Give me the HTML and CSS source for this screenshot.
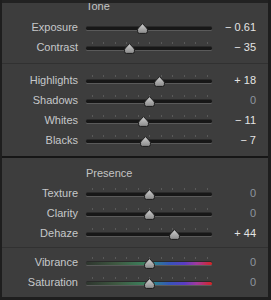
FILE: index.html
```html
<!DOCTYPE html>
<html>
<head>
<meta charset="utf-8">
<link rel="stylesheet" href="styles.css">
</head>
<body>
<svg class="defs" width="0" height="0" aria-hidden="true">
  <defs>
    <linearGradient id="tg" x1="0" y1="0" x2="0" y2="1">
      <stop offset="0" stop-color="#cfcfcf"/>
      <stop offset="1" stop-color="#8a8a8a"/>
    </linearGradient>
    <symbol id="thumb" viewBox="0 0 11 11">
      <path d="M5.5 0.6 L9.6 5 L10.4 6.2 L10.4 8.6 Q10.4 10.4 8.6 10.4 L2.4 10.4 Q0.6 10.4 0.6 8.6 L0.6 6.2 L1.4 5 Z" fill="url(#tg)" stroke="#1b1b1b" stroke-width="1"/>
    </symbol>
  </defs>
</svg>
<div class="panel">
  <div class="group g-tone">
    <div class="hdr hdr-top">Tone</div>
    <div class="row">
      <div class="label">Exposure</div>
      <div class="slider notick"><div class="ticks"></div><div class="track"></div><svg class="thumb" style="--p:0.439"><use href="#thumb"/></svg></div>
      <div class="val on">&minus; 0.61</div>
    </div>
    <div class="row">
      <div class="label">Contrast</div>
      <div class="slider"><div class="ticks"></div><div class="track"></div><svg class="thumb" style="--p:0.325"><use href="#thumb"/></svg></div>
      <div class="val on">&minus; 35</div>
    </div>
  </div>
  <div class="sep"></div>
  <div class="group g-mid">
    <div class="row">
      <div class="label">Highlights</div>
      <div class="slider"><div class="ticks"></div><div class="track"></div><svg class="thumb" style="--p:0.59"><use href="#thumb"/></svg></div>
      <div class="val on">+ 18</div>
    </div>
    <div class="row">
      <div class="label">Shadows</div>
      <div class="slider"><div class="ticks"></div><div class="track"></div><svg class="thumb" style="--p:0.5"><use href="#thumb"/></svg></div>
      <div class="val">0</div>
    </div>
    <div class="row">
      <div class="label">Whites</div>
      <div class="slider"><div class="ticks"></div><div class="track"></div><svg class="thumb" style="--p:0.445"><use href="#thumb"/></svg></div>
      <div class="val on">&minus; 11</div>
    </div>
    <div class="row">
      <div class="label">Blacks</div>
      <div class="slider"><div class="ticks"></div><div class="track"></div><svg class="thumb" style="--p:0.465"><use href="#thumb"/></svg></div>
      <div class="val on">&minus; 7</div>
    </div>
  </div>
  <div class="divider"></div>
  <div class="group g-pres">
    <div class="hdr">Presence</div>
    <div class="row">
      <div class="label">Texture</div>
      <div class="slider"><div class="ticks"></div><div class="track"></div><svg class="thumb" style="--p:0.5"><use href="#thumb"/></svg></div>
      <div class="val">0</div>
    </div>
    <div class="row">
      <div class="label">Clarity</div>
      <div class="slider"><div class="ticks"></div><div class="track"></div><svg class="thumb" style="--p:0.5"><use href="#thumb"/></svg></div>
      <div class="val">0</div>
    </div>
    <div class="row">
      <div class="label">Dehaze</div>
      <div class="slider"><div class="ticks"></div><div class="track"></div><svg class="thumb" style="--p:0.72"><use href="#thumb"/></svg></div>
      <div class="val on">+ 44</div>
    </div>
  </div>
  <div class="sep"></div>
  <div class="group g-color">
    <div class="row">
      <div class="label">Vibrance</div>
      <div class="slider"><div class="ticks"></div><div class="track color"></div><svg class="thumb" style="--p:0.5"><use href="#thumb"/></svg></div>
      <div class="val">0</div>
    </div>
    <div class="row">
      <div class="label">Saturation</div>
      <div class="slider"><div class="ticks"></div><div class="track color"></div><svg class="thumb" style="--p:0.5"><use href="#thumb"/></svg></div>
      <div class="val">0</div>
    </div>
  </div>
</div>
</body>
</html>
```

FILE: styles.css
```css
html, body {
  margin: 0;
  padding: 0;
}
body {
  width: 271px;
  height: 300px;
  background: #1e1e1e;
  overflow: hidden;
  font-family: "Liberation Sans", Arial, sans-serif;
  font-size: 11px;
}
.defs {
  display: block;
  width: 0;
  height: 0;
  overflow: hidden;
}
.panel {
  position: relative;
  margin-left: 2px;
  width: 266px;
  height: 297px;
  background: #3d3d3d;
  overflow: hidden;
}
.panel::before {
  content: "";
  position: absolute;
  left: 0;
  right: 0;
  top: 0;
  height: 3px;
  background: #222;
  z-index: 2;
}
.group {
  display: flex;
  flex-direction: column;
}
.g-tone { padding-bottom: 6px; }
.g-mid { padding: 6px 0; }
.g-pres { padding: 5px 0 4px; }
.g-color { padding-top: 4px; }
.sep {
  height: 1px;
  background: #313131;
}
.divider {
  height: 2px;
  background: #161616;
}
.hdr {
  height: 20px;
  line-height: 20px;
  padding-left: 84px;
  color: #c4c4c4;
}
.hdr-top {
  height: 17px;
  line-height: 13px;
}
.row {
  display: flex;
  height: 20px;
  line-height: 20px;
}
.label {
  width: 76px;
  text-align: right;
  color: #c6c8ca;
}
.slider {
  position: relative;
  width: 126px;
  height: 20px;
  margin-left: 8px;
}
.ticks {
  position: absolute;
  left: 6px;
  top: 5px;
  width: 116px;
  height: 2px;
  background: repeating-linear-gradient(to right, #595959 0 1px, transparent 1px 11.5px);
}
.notick .ticks {
  display: none;
}
.track {
  position: absolute;
  left: 0;
  right: 0;
  top: 10px;
  height: 3px;
  border-radius: 2px;
  background: #171717;
  box-shadow: 0 -1px 0 #2a2a2a, 0 1px 0 #5a5a5a;
}
.track.color {
  background: linear-gradient(to right, #2e352e 0%, #3f5a42 25%, #3c7d5a 45%, #2f7f8f 55%, #3556b8 66%, #5a3cc4 78%, #a23a9c 88%, #d42424 100%);
}
.thumb {
  position: absolute;
  top: 6px;
  left: calc(6px + var(--p) * 115px - 5.5px);
  width: 11px;
  height: 11px;
  z-index: 1;
}
.val {
  width: 44px;
  text-align: right;
  color: #8d969f;
}
.val.on {
  color: #e4e4e4;
}
```
